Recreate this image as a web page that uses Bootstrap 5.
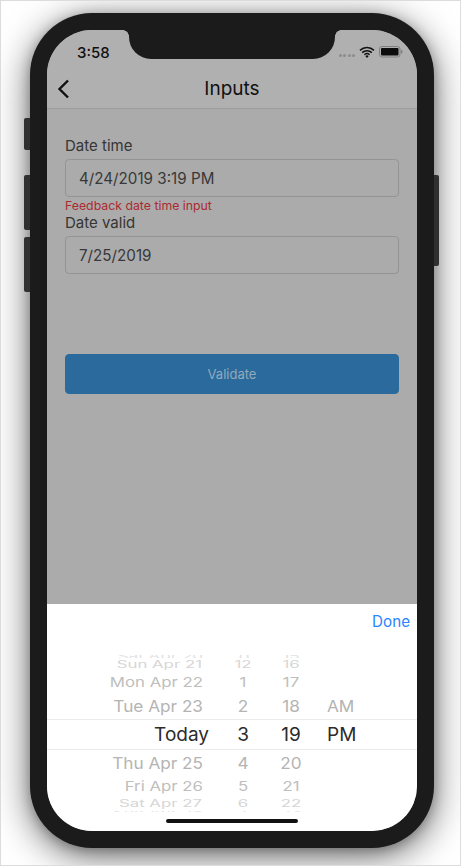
<!DOCTYPE html>
<html lang="en">
<head>
  <meta charset="UTF-8" />
  <meta name="viewport" content="width=device-width, initial-scale=1" />
  <title>Inputs</title>
  <link href="https://cdn.jsdelivr.net/npm/bootstrap@5.3.0/dist/css/bootstrap.min.css" rel="stylesheet" />
  <style>
    html, body { height: 100%; }
    body {
      background: #fff;
      font-family: Inter, "Liberation Sans", sans-serif;
      overflow: hidden;
    }
    .page-edge {
      width: 461px;
      height: 866px;
      padding: 13px 27px 18px 30px;
      border: 1px solid #dcdcdc;
      overflow: hidden;
    }
    /* phone body */
    .phone {
      position: relative;
      width: 404px;
      height: 835px;
      margin-top: -1px;
      margin-left: -1px;
      padding: 17px;
      background: #1b1b1b;
      border-radius: 62px;
      box-shadow: 0 8px 36px rgba(0, 0, 0, .6), 0 2px 12px rgba(0, 0, 0, .25);
    }
    .side-btn {
      position: absolute;
      width: 6px;
      background: #303030;
      border-radius: 2px 0 0 2px;
    }
    .btn-a { left: -6px; top: 105px; height: 32px; }
    .btn-b { left: -6px; top: 162px; height: 55px; }
    .btn-c { left: -6px; top: 224px; height: 55px; }
    .btn-d { right: -5px; top: 162px; height: 91px; width: 5px; border-radius: 0 2px 2px 0; }
    .screen {
      position: relative;
      width: 370px;
      height: 801px;
      border-radius: 45px;
      overflow: hidden;
      background: #ababab;
    }
    .notch {
      position: absolute;
      left: 82px;
      top: 0;
      width: 206px;
      height: 29px;
      background: #1b1b1b;
      border-radius: 0 0 22px 22px;
    }
    .notch::before, .notch::after {
      content: "";
      position: absolute;
      top: 0;
      width: 6px;
      height: 6px;
    }
    .notch::before { left: -6px; background: radial-gradient(circle at 0 100%, transparent 5.5px, #1b1b1b 6px); }
    .notch::after { right: -6px; background: radial-gradient(circle at 100% 100%, transparent 5.5px, #1b1b1b 6px); }
    .top-area { background: #b0b0b0; }
    .status-row {
      height: 40px;
      padding: 12px 14px 0 30px;
      font-size: 15px;
      font-weight: 500;
      color: #111;
      line-height: 22px;
    }
    .sig-dot { width: 3px; height: 3px; background: #8d8d8d; border-radius: 50%; }
    .signal { margin-top: 12px; gap: 1.5px; }
    .nav-row {
      position: relative;
      height: 39px;
      border-bottom: 1px solid #9d9d9d;
      font-size: 19px;
      line-height: 37px;
      color: #111;
    }
    .back-btn { position: absolute; left: 10px; top: 9px; }
    .form-area { padding: 27px 18px 0; height: 495px; }
    .form-area .form-label {
      font-size: 15px;
      line-height: 20px;
      color: #353535;
      margin-bottom: 3px;
      display: block;
    }
    .form-area .form-control {
      height: 38px;
      padding: 0 13px;
      font-size: 15.2px;
      color: #383838;
      background: #ababab;
      border: 1px solid #949494;
      border-radius: 4px;
      font-family: inherit;
    }
    .form-area .invalid-feedback {
      font-size: 12.3px;
      line-height: 15px;
      color: #ac2a30;
      margin-top: 1px;
      margin-bottom: 0;
    }
    .form-area .btn-primary {
      height: 40px;
      margin-top: 80px;
      padding-top: 7px;
      background: #2a6a9c;
      border-color: #2a6a9c;
      color: #92aabc;
      font-size: 13px;
      border-radius: 4px;
    }
    /* date picker sheet */
    .sheet { background: #fff; height: 227px; position: relative; }
    .done-row {
      height: 51px;
      padding: 7px 7px 0 0;
      font-size: 15.2px;
      line-height: 22px;
      color: #2a84ff;
    }
    .wheel { height: 157px; overflow: hidden; }
    .wheel-row {
      display: grid;
      grid-template-columns: 178px 36px 60px 1fr;
      overflow: hidden;
      color: #b4b4b4;
      font-size: 17px;
      white-space: nowrap;
      align-items: center;
    }
    .wheel-row span { display: block; text-align: center; }
    .wheel-row span:first-child { text-align: right; padding-right: 22px; }
    .wheel-row span:last-child { text-align: left; padding-left: 6px; }
    .r-clip { height: 3px; color: #e2e2e2; line-height: 3px; }
    .r-clip span { transform: scaleY(.45); }
    .r-far { height: 14px; line-height: 14px; color: #d6d6d6; font-size: 16.8px; }
    .r-far span { transform: scaleY(.58); }
    .r-far span:first-child { padding-right: 23px; }
    .r-mid { height: 21px; line-height: 21px; color: #bebebe; font-size: 16.8px; }
    .r-mid span { transform: scaleY(.8); }
    .r-near { height: 26px; line-height: 26px; font-size: 17.2px; }
    .r-near span { transform: scaleY(.95); }
    .r-now {
      height: 31px;
      line-height: 29px;
      color: #2b2b2b;
      font-size: 19px;
      border-top: 1px solid #ececec;
      border-bottom: 1px solid #ececec;
    }
    .r-now span:first-child { padding-right: 16px; }
    .home-bar {
      position: absolute;
      left: 119px;
      bottom: 8px;
      width: 132px;
      height: 4px;
      background: #111;
      border-radius: 2px;
    }
  </style>
</head>
<body>

  <div class="page-edge">
    <div class="phone">
      <div class="side-btn btn-a"></div>
      <div class="side-btn btn-b"></div>
      <div class="side-btn btn-c"></div>
      <div class="side-btn btn-d"></div>

      <div class="screen">
        <div class="top-area">
          <div class="status-row d-flex justify-content-between">
            <span>3:58</span>
            <div class="d-flex align-items-start gap-1">
              <div class="signal d-flex">
                <i class="sig-dot"></i><i class="sig-dot"></i><i class="sig-dot"></i><i class="sig-dot"></i>
              </div>
              <svg width="16" height="12" viewBox="0 0 16 12" class="mt-1">
                <path d="M1 4.4a10 10 0 0 1 14 0M3.2 6.6a7 7 0 0 1 9.6 0M5.4 8.7a4 4 0 0 1 5.2 0" fill="none" stroke="#111" stroke-width="1.5" />
                <path d="M8 12l-1.7-2a2.6 2.6 0 0 1 3.4 0z" fill="#111" />
              </svg>
              <svg width="24" height="12" viewBox="0 0 24 12" class="mt-1">
                <rect x=".5" y=".5" width="20.5" height="10.5" rx="2.5" fill="none" stroke="#7f7f7f" />
                <rect x="2" y="2" width="17.5" height="7.5" rx="1" fill="#0c0c0c" />
                <rect x="22" y="4" width="1.4" height="3.5" rx=".7" fill="#7f7f7f" />
              </svg>
            </div>
          </div>
          <div class="nav-row text-center">
            <svg class="back-btn" width="14" height="20" viewBox="0 0 14 20">
              <path d="M11 1.5L2.5 10l8.5 8.5" fill="none" stroke="#111" stroke-width="2.4" />
            </svg>
            Inputs
          </div>
        </div>

        <form class="form-area" onsubmit="return false">
          <label class="form-label" for="dateTime">Date time</label>
          <input class="form-control" id="dateTime" type="text" value="4/24/2019 3:19 PM" />
          <div class="invalid-feedback d-block">Feedback date time input</div>
          <label class="form-label" for="dateValid">Date valid</label>
          <input class="form-control" id="dateValid" type="text" value="7/25/2019" />
          <button class="btn btn-primary w-100" type="submit">Validate</button>
        </form>

        <div class="sheet">
          <div class="done-row text-end">Done</div>
          <div class="wheel" id="wheel"></div>
          <div class="home-bar"></div>
        </div>

        <div class="notch"></div>
      </div>
    </div>
  </div>

  <script>
    // filas del picker, de arriba a abajo
    const wheelRows = [
      ['r-clip', 'Sat Apr 20', '11', '15', ''],
      ['r-far', 'Sun Apr 21', '12', '16', ''],
      ['r-mid', 'Mon Apr 22', '1', '17', ''],
      ['r-near', 'Tue Apr 23', '2', '18', 'AM'],
      ['r-now', 'Today', '3', '19', 'PM'],
      ['r-near', 'Thu Apr 25', '4', '20', ''],
      ['r-mid', 'Fri Apr 26', '5', '21', ''],
      ['r-far', 'Sat Apr 27', '6', '22', ''],
      ['r-clip', 'Sun Apr 28', '7', '23', '']
    ];
    document.getElementById('wheel').innerHTML = wheelRows.map(([cls, ...cells]) =>
      `<div class="wheel-row ${cls}">${cells.map(c => `<span>${c}</span>`).join('')}</div>`
    ).join('');
  </script>
  <script src="https://cdn.jsdelivr.net/npm/bootstrap@5.3.0/dist/js/bootstrap.bundle.min.js"></script>
</body>
</html>
